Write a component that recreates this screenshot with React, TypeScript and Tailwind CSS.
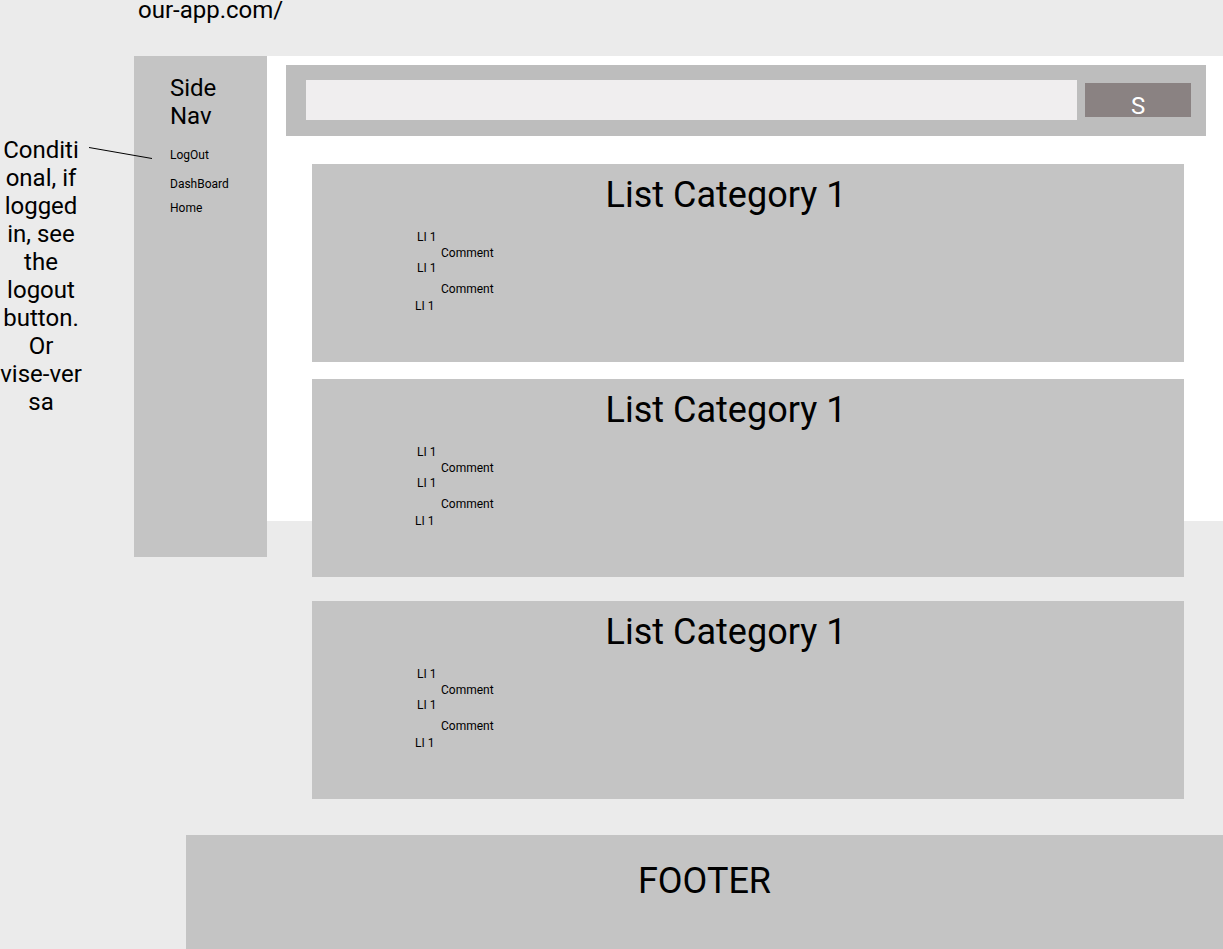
const categories = [
  { id: "first", title: "List Category 1", spacing: "" },
  { id: "second", title: "List Category 1", spacing: "mt-[17px]" },
  { id: "third", title: "List Category 1", spacing: "mt-6" },
];

const links = [
  { label: "LogOut", spacing: "mt-[18px]" },
  { label: "DashBoard", spacing: "mt-[15px]" },
  { label: "Home", spacing: "mt-[10px]" },
];

function Note() {
  return (
    <aside className="relative w-[134px] shrink-0 pt-20">
      <p className="w-[82px] text-center text-2xl leading-7 whitespace-nowrap">
        Conditi
        <br />
        onal, if
        <br />
        logged
        <br />
        in, see
        <br />
        the
        <br />
        logout
        <br />
        button.
        <br />
        Or
        <br />
        vise-ver
        <br />
        sa
      </p>
      <svg
        className="absolute top-[90px] left-[88px] z-10"
        width="66"
        height="14"
        viewBox="0 0 66 14"
        aria-hidden="true"
      >
        <path d="M1 1.5 L64 12.5" stroke="#000" strokeWidth="1" fill="none" />
      </svg>
    </aside>
  );
}

function SideNav() {
  return (
    <nav className="min-h-[501px] w-[133px] shrink-0 self-start bg-[#c4c4c4] pt-[18px] pl-9">
      <h2 className="w-16 text-2xl leading-7">Side Nav</h2>
      <ul className="text-xs leading-[14px]">
        {links.map((link) => (
          <li key={link.label} className={link.spacing}>
            <a href="#" className="block">
              {link.label}
            </a>
          </li>
        ))}
      </ul>
    </nav>
  );
}

function SearchBar() {
  return (
    <form
      className="flex items-center gap-2 bg-[#bdbdbd] pt-[15px] pr-[15px] pb-4 pl-5"
      onSubmit={(event) => event.preventDefault()}
    >
      <input
        type="text"
        aria-label="Search"
        className="h-10 min-w-0 flex-1 bg-[#f0eeef] px-3 text-2xl outline-none"
      />
      <button
        type="submit"
        className="flex h-[34px] w-[106px] items-center justify-center bg-[#8a8282] pt-3 text-2xl leading-7 text-white"
      >
        S
      </button>
    </form>
  );
}

function CategoryCard({ title, spacing }: { title: string; spacing: string }) {
  return (
    <section className={`bg-[#c4c4c4] pt-[10px] pb-[49px] ${spacing}`}>
      <h2 className="pr-11 text-center text-4xl leading-[42px]">{title}</h2>
      <ul className="mt-[14px] pl-[103px] text-xs leading-[14px]">
        <li className="pl-0.5">
          LI 1
          <p className="mt-0.5 pl-6">Comment</p>
        </li>
        <li className="mt-px pl-0.5">
          LI 1
          <p className="mt-[7px] pl-6">Comment</p>
        </li>
        <li className="mt-[3px]">LI 1</li>
      </ul>
    </section>
  );
}

export default function App() {
  return (
    <div className="flex min-h-screen flex-col bg-[#ebebeb] font-[Roboto,sans-serif] text-black">
      <header className="h-14 pl-[138px] text-2xl leading-5">our-app.com/</header>
      <div className="flex">
        <Note />
        <SideNav />
        <main className="min-w-0 flex-1 bg-[linear-gradient(to_bottom,#fff_465px,transparent_465px)] pt-[9px] pr-[17px] pb-9 pl-[19px]">
          <SearchBar />
          <div className="pt-7 pr-[22px] pl-[26px]">
            {categories.map((category) => (
              <CategoryCard key={category.id} title={category.title} spacing={category.spacing} />
            ))}
          </div>
        </main>
      </div>
      <footer className="ml-[186px] flex-1 bg-[#c4c4c4] pt-[25px] pb-10 text-center text-4xl leading-[42px]">
        FOOTER
      </footer>
    </div>
  );
}
